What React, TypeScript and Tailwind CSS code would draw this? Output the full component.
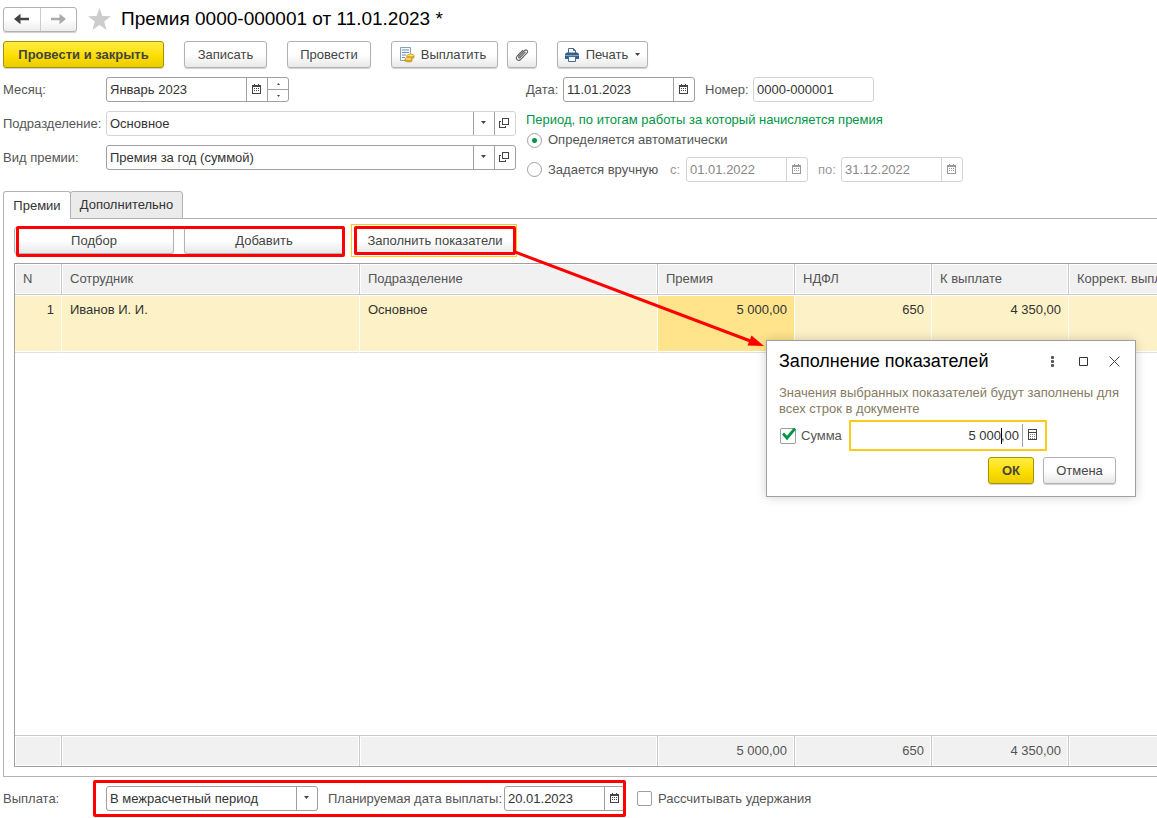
import type { ReactNode } from "react";
import { clsx } from "clsx";

const COLUMNS = [
  { title: "N", width: "w-[47px]", value: "1", total: "", right: true },
  { title: "Сотрудник", width: "w-[298px]", value: "Иванов И. И.", total: "", right: false },
  { title: "Подразделение", width: "w-[298px]", value: "Основное", total: "", right: false },
  { title: "Премия", width: "w-[137px]", value: "5 000,00", total: "5 000,00", right: true },
  { title: "НДФЛ", width: "w-[137px]", value: "650", total: "650", right: true },
  { title: "К выплате", width: "w-[137px]", value: "4 350,00", total: "4 350,00", right: true },
  { title: "Коррект. выплаты", width: "w-[137px]", value: "", total: "", right: true },
];

function CalendarIcon() {
  return (
    <svg width="9" height="10" viewBox="0 0 9 10" fill="none" shapeRendering="crispEdges" aria-hidden="true">
      <path d="M0 1h9v2H0zM2 0h1v1H2zM6 0h1v1H6zM0 3h1v6H0zM8 3h1v6H8zM0 9h9v1H0z" fill="currentColor" />
      <path d="M2 4h1v1H2zM4 4h1v1H4zM6 4h1v1H6zM2 6h1v1H2zM4 6h1v1H4zM6 6h1v1H6z" fill="currentColor" />
    </svg>
  );
}

function CalculatorIcon() {
  return (
    <svg width="9" height="11" viewBox="0 0 9 11" shapeRendering="crispEdges" fill="currentColor" aria-hidden="true">
      <path d="M0 0h9v1H0zM0 1h1v9H0zM8 1h1v9H8zM0 10h9v1H0zM1 3h7v1H1z" />
      <path d="M2 5h1v1H2zM4 5h1v1H4zM6 5h1v1H6zM2 7h1v1H2zM4 7h1v1H4zM6 7h1v1H6zM2 9h1v1H2zM4 9h1v1H4zM6 9h1v1H6z" opacity=".7" />
    </svg>
  );
}

function OpenIcon() {
  return (
    <svg width="10" height="10" viewBox="0 0 10 10" fill="none" stroke="currentColor" shapeRendering="crispEdges" aria-hidden="true">
      <path d="M3.5 .5h6v6h-6zM2 3.5H.5v6h6V8" />
    </svg>
  );
}

function DownIcon() {
  return (
    <svg width="5" height="3" viewBox="0 0 5 3" fill="currentColor" aria-hidden="true">
      <path d="M0 0h5L2.5 3z" />
    </svg>
  );
}

function ArrowIcon({ flip = false }: { flip?: boolean }) {
  return (
    <svg width="15" height="12" viewBox="0 0 15 12" className={clsx(flip && "rotate-180")} aria-hidden="true">
      <path d="M0 6 6.500.800V4.800H15v2.400H6.500v4z" fill="currentColor" />
    </svg>
  );
}

function PayIcon() {
  return (
    <svg width="16" height="16" viewBox="0 0 16 16" aria-hidden="true">
      <path d="M1.500.500h10v13h-10z" fill="#f4f8fb" stroke="#8aa0b4" />
      <path d="M3 3h7M3 5.500h7M3 8h4M3 10.500h3" stroke="#6f93b5" />
      <path d="M8 8.500v2c0 1.200 7 1.200 7 0v-2zM6 12v2c0 1.200 7 1.200 7 0v-2z" fill="#e3ac22" stroke="#b98816" strokeWidth=".7" />
      <ellipse cx="11.500" cy="8.500" rx="3.500" ry="1.400" fill="#ffdf70" stroke="#c4941c" strokeWidth=".7" />
      <ellipse cx="9.500" cy="12" rx="3.500" ry="1.400" fill="#ffdf70" stroke="#c4941c" strokeWidth=".7" />
    </svg>
  );
}

function PrinterIcon() {
  return (
    <svg width="14" height="14" viewBox="0 0 14 14" aria-hidden="true">
      <path d="M3.500 5V.500h5l2 2V5" fill="#fff" stroke="#476b8c" />
      <path d="M8.500.500v2h2" fill="none" stroke="#476b8c" />
      <path d="M1.500 4.500h11L14 6v5H0V6z" fill="#33618c" />
      <path d="M0 7.500h14" stroke="#7fa3c4" />
      <path d="M3.500 8.500h7v5h-7z" fill="#fff" stroke="#476b8c" />
    </svg>
  );
}

function ClipIcon() {
  return (
    <svg width="14" height="14" viewBox="0 0 14 14" fill="none" stroke="#606060" strokeWidth="1.100" strokeLinecap="round" aria-hidden="true">
      <path d="m10.200 4.200-5.100 5.300c-.9.900-2-.2-1.200-1.100l5.700-5.900c1.700-1.700 4.200.6 2.500 2.400l-6.300 6.500c-2.400 2.500-6-.8-3.600-3.400l5.500-5.700" />
    </svg>
  );
}

function PushButton({ children, className, primary = false, label }: { children: ReactNode; className?: string; primary?: boolean; label?: string }) {
  return (
    <button
      type="button"
      aria-label={label}
      className={clsx(
        "flex h-[27px] items-center justify-center rounded-[3px] border whitespace-nowrap shadow-[0_1px_1px_#00000030]",
        primary
          ? "border-[#a59300] bg-linear-to-b from-[#ffec3d] via-[#ffe000] to-[#ebcc00] font-bold text-[#444444]"
          : "border-[#b2b2b2] bg-linear-to-b from-white via-white to-[#e8e8e8] text-[#444444]",
        className,
      )}
    >
      {children}
    </button>
  );
}

function Segment({ children, label, tone }: { children: ReactNode; label: string; tone: string }) {
  return (
    <button type="button" aria-label={label} className={clsx("flex w-[21px] shrink-0 items-center justify-center border-l pr-0.5 pb-0.5", tone)}>
      {children}
    </button>
  );
}

const DARK = "border-[#a0a0a0] text-[#444444]";
const FADED = "border-[#d4d4d4] text-[#999999]";

function DateField({ id, value, className, disabled = false }: { id: string; value: string; className: string; disabled?: boolean }) {
  const tone = disabled ? FADED : DARK;
  return (
    <div className={clsx("flex h-[25px] shrink-0 rounded-[3px] border bg-white", tone, className)}>
      <input id={id} defaultValue={value} disabled={disabled} className={clsx("min-w-0 flex-1 px-[3px] outline-none", disabled ? "text-[#888888]" : "text-[#333333]")} />
      <Segment label="Открыть календарь" tone={tone}><CalendarIcon /></Segment>
    </div>
  );
}

function PickField({ id, value, className, light = false, open = true }: { id: string; value: string; className: string; light?: boolean; open?: boolean }) {
  return (
    <div className={clsx("flex h-[25px] shrink-0 rounded-[3px] border bg-white", light ? "border-[#d4d4d4]" : "border-[#a0a0a0]", className)}>
      <select id={id} className="min-w-0 flex-1 appearance-none px-[3px] text-[#333333] outline-none">
        <option>{value}</option>
      </select>
      <Segment label="Выбрать из списка" tone={DARK}><DownIcon /></Segment>
      {open && <Segment label="Открыть" tone={DARK}><OpenIcon /></Segment>}
    </div>
  );
}

function RedFrame({ className }: { className: string }) {
  return <div aria-hidden="true" className={clsx("pointer-events-none absolute rounded-[2px] border-3 border-[#ff0000]", className)} />;
}

function Dialog() {
  return (
    <section role="dialog" aria-labelledby="dialog-title" className="absolute top-[340px] left-[766px] w-[370px] border border-[#a0a0a0] bg-white px-3 pt-2 pb-3 shadow-[0_0_10px_#00000030]">
      <div className="-mr-1 flex h-6 items-center">
        <h2 id="dialog-title" className="flex-1 text-[18px] text-black">Заполнение показателей</h2>
        <div className="flex items-center gap-[5px] text-[#444444]">
          <button type="button" aria-label="Ещё" className="flex size-[26px] items-center justify-center">
            <svg width="3" height="11" viewBox="0 0 3 11" fill="#555555"><rect width="3" height="3" rx="1" /><rect y="4" width="3" height="3" rx="1" /><rect y="8" width="3" height="3" rx="1" /></svg>
          </button>
          <button type="button" aria-label="Развернуть" className="flex size-[26px] items-center justify-center">
            <svg width="9" height="9" viewBox="0 0 9 9" fill="none" stroke="#333333"><path d="M.5.5h8v8h-8z" /></svg>
          </button>
          <button type="button" aria-label="Закрыть" className="flex size-[26px] items-center justify-center">
            <svg width="11" height="11" viewBox="0 0 11 11" fill="none" stroke="#444444"><path d="m.5.5 10 10m0-10-10 10" /></svg>
          </button>
        </div>
      </div>
      <p className="mt-3 -mr-2 leading-4 text-[#857b62]">Значения выбранных показателей будут заполнены для всех строк в документе</p>
      <div className="mt-[3px] flex items-center">
        <label className="flex w-[70px] items-center gap-[5px] pl-px">
          <span className="relative flex size-4">
            <input type="checkbox" defaultChecked className="peer size-4 appearance-none rounded-[2px] border border-[#a0a0a0] bg-white" />
            <svg width="14" height="13" viewBox="0 0 14 13" className="pointer-events-none absolute top-0 left-0.5 hidden peer-checked:block" fill="none" stroke="#009646" strokeWidth="2.800"><path d="m1 5.500 4 4.500 8-9.500" /></svg>
          </span>
          Сумма
        </label>
        <div className="flex h-[31px] w-[198px] items-stretch border-2 border-[#fcc91c] py-0.5 pr-0.5">
          <div className="relative flex min-w-0 flex-1">
            <input aria-label="Сумма" defaultValue="5 000,00" className="w-full px-[3px] text-right text-[#333333] outline-none" />
            <span aria-hidden="true" className="absolute top-1 right-[20px] h-4 w-px bg-black" />
          </div>
          <Segment label="Калькулятор" tone={DARK}><CalculatorIcon /></Segment>
        </div>
      </div>
      <div className="mt-1.5 flex justify-end gap-[9px] pr-[7px]">
        <PushButton primary className="w-[46px]">ОК</PushButton>
        <PushButton className="w-[73px]">Отмена</PushButton>
      </div>
    </section>
  );
}

function BonusTable() {
  return (
    <div className="ml-[10px] flex flex-1 overflow-hidden border-y border-l border-[#a0a0a0]">
      <table className="w-[1191px] min-w-full shrink-0 table-fixed border-separate border-spacing-0 text-left">
        <thead>
          <tr className="h-[31px]">
            {COLUMNS.map((c, i) => (
              <th key={c.title} scope="col" className={clsx("border-b border-[#cacaca] bg-[#f1f1f1] px-2 font-normal text-[#555555] shadow-[inset_0_0_0_1px_white]", c.width, i < 6 && "border-r")}>
                {c.title}
              </th>
            ))}
          </tr>
        </thead>
        <tbody>
          <tr className="h-[58px]">
            {COLUMNS.map((c, i) => (
              <td key={c.title} className={clsx("border-b border-b-[#e0e0e0] pt-[7px] pr-[7px] pl-2 align-top text-[#333333] shadow-[inset_0_1px_white,inset_0_-1px_white]", i < 6 && "border-r border-r-white", i === 3 ? "bg-[#ffe48c]" : "bg-[#fdf2c7]", c.right && "text-right")}>
                {c.value}
              </td>
            ))}
          </tr>
          <tr><td colSpan={7} /></tr>
        </tbody>
        <tfoot>
          <tr className="h-[31px]">
            {COLUMNS.map((c, i) => (
              <td key={c.title} className={clsx("border-t border-[#cacaca] bg-[#f1f1f1] pr-[7px] pl-2 text-right text-[#555555] shadow-[inset_0_0_0_1px_white]", i < 6 && "border-r")}>
                {c.total}
              </td>
            ))}
          </tr>
        </tfoot>
      </table>
    </div>
  );
}

export default function App() {
  return (
    <main className="relative flex min-h-screen flex-col overflow-hidden bg-white pl-[3px] font-['Liberation_Sans',Arial,sans-serif] text-[13px] leading-4 text-[#555555]">
      <header className="flex h-[38px] items-center">
        <nav className="flex h-[25px] w-[74px] rounded-[3px] border border-[#b2b2b2] bg-linear-to-b from-white via-white to-[#ececec] shadow-[0_1px_1px_#00000030]">
          <button type="button" aria-label="Назад" className="flex flex-1 items-center justify-center border-r border-[#cccccc] text-[#444444]"><ArrowIcon /></button>
          <button type="button" aria-label="Вперед" className="flex flex-1 items-center justify-center text-[#aaaaaa]"><ArrowIcon flip /></button>
        </nav>
        <button type="button" aria-label="В избранное" className="ml-[11px]">
          <svg width="23" height="22" viewBox="0 0 23 22" fill="#cdcdcd"><path d="m11.500 0 2.900 7.900 8.600.3-6.800 5.200L18.600 22l-7.100-5-7.100 5 2.400-8.600L0 8.200l8.600-.3z" /></svg>
        </button>
        <h1 className="ml-[10px] text-[19px] text-black">Премия 0000-000001 от 11.01.2023 *</h1>
      </header>

      <div className="mt-[3px] flex">
        <PushButton primary className="w-[161px]">Провести и закрыть</PushButton>
        <PushButton className="ml-5 w-[83px]">Записать</PushButton>
        <PushButton className="ml-5 w-[84px]">Провести</PushButton>
        <PushButton className="ml-5 w-[107px] gap-1.5 pr-1"><PayIcon />Выплатить</PushButton>
        <PushButton className="ml-[9px] w-[30px]" label="Присоединенные файлы"><ClipIcon /></PushButton>
        <PushButton className="ml-5 w-[91px] gap-[7px]"><PrinterIcon />Печать<DownIcon /></PushButton>
      </div>

      <div className="mt-[9px] flex gap-[10px]">
        <div className="flex w-[513px] shrink-0 flex-col gap-[9px]">
          <div className="flex items-center">
            <label htmlFor="month" className="w-[103px]">Месяц:</label>
            <div className="flex h-[25px] w-[183px] rounded-[3px] border border-[#a0a0a0]">
              <input id="month" defaultValue="Январь 2023" className="min-w-0 flex-1 px-[3px] text-[#333333] outline-none" />
              <Segment label="Открыть календарь" tone={DARK}><CalendarIcon /></Segment>
              <div className="flex w-[21px] flex-col border-l border-[#a0a0a0] text-[#444444]">
                <button type="button" aria-label="Следующий месяц" className="flex flex-1 items-center justify-center border-b border-[#a0a0a0]">
                  <svg width="3" height="2" viewBox="0 0 3 2" fill="currentColor"><path d="M0 2h3L1.500 0z" /></svg>
                </button>
                <button type="button" aria-label="Предыдущий месяц" className="flex flex-1 items-center justify-center">
                  <svg width="3" height="2" viewBox="0 0 3 2" fill="currentColor"><path d="M0 0h3L1.500 2z" /></svg>
                </button>
              </div>
            </div>
          </div>
          <div className="flex items-center">
            <label htmlFor="department" className="w-[103px]">Подразделение:</label>
            <PickField id="department" value="Основное" className="w-[410px]" light />
          </div>
          <div className="flex items-center">
            <label htmlFor="kind" className="w-[103px]">Вид премии:</label>
            <PickField id="kind" value="Премия за год (суммой)" className="w-[410px]" />
          </div>
        </div>

        <div className="flex flex-col">
          <div className="flex items-center">
            <label htmlFor="date" className="w-[37px]">Дата:</label>
            <DateField id="date" value="11.01.2023" className="w-[132px]" />
            <label htmlFor="number" className="ml-[10px] w-12">Номер:</label>
            <input id="number" defaultValue="0000-000001" className="h-[25px] w-[121px] rounded-[3px] border border-[#d4d4d4] px-[3px] text-[#333333] outline-none" />
          </div>
          <fieldset className="mt-[10px]">
            <legend className="text-[#009646]">Период, по итогам работы за который начисляется премия</legend>
            <label className="mt-1 flex items-center gap-1.5">
              <input type="radio" name="period" defaultChecked className="ml-px size-[15px] appearance-none rounded-full border border-[#a0a0a0] bg-white checked:bg-[radial-gradient(circle,#009646_2px,transparent_3px)]" />
              Определяется автоматически
            </label>
            <div className="mt-[9px] flex items-center">
              <label className="flex w-36 items-center gap-1.5">
                <input type="radio" name="period" className="ml-px size-[15px] appearance-none rounded-full border border-[#a0a0a0] bg-white checked:bg-[radial-gradient(circle,#009646_2px,transparent_3px)]" />
                Задается вручную
              </label>
              <label htmlFor="from" className="w-4 text-[#999999]">с:</label>
              <DateField id="from" value="01.01.2022" className="w-[122px]" disabled />
              <label htmlFor="to" className="ml-[10px] w-[23px] text-[#999999]">по:</label>
              <DateField id="to" value="31.12.2022" className="w-[122px]" disabled />
            </div>
          </fieldset>
        </div>
      </div>

      <div role="tablist" className="relative z-10 mt-[9px] -mb-px flex h-7 text-[#333333]">
        <button type="button" role="tab" aria-selected="true" className="w-[68px] rounded-t-[3px] border border-b-0 border-[#b2b2b2] bg-white">Премии</button>
        <button type="button" role="tab" aria-selected="false" className="-ml-px w-[113px] rounded-t-[3px] border border-[#b2b2b2] bg-[#ebebeb]">Дополнительно</button>
      </div>

      <section role="tabpanel" className="flex flex-1 flex-col border-y border-l border-[#b2b2b2] pt-2 pb-[9px]">
        <div className="mb-[9px] ml-[10px] flex">
          <div className="relative flex gap-[10px]">
            <PushButton className="w-40">Подбор</PushButton>
            <PushButton className="w-40">Добавить</PushButton>
            <RedFrame className="-top-px -right-px -bottom-[3px] left-0.5" />
          </div>
          <div className="relative ml-[10px] flex">
            <PushButton className="w-[162px]">Заполнить показатели</PushButton>
            <div aria-hidden="true" className="pointer-events-none absolute -inset-y-[3px] -right-px -left-[3px] border border-[#fcc91c]" />
            <RedFrame className="-inset-y-px inset-x-0" />
          </div>
        </div>
        <BonusTable />
      </section>

      <footer className="flex h-[41px] items-center pt-0.5">
        <label htmlFor="payment" className="w-[103px]">Выплата:</label>
        <div className="relative flex items-center">
          <PickField id="payment" value="В межрасчетный период" className="w-[212px]" open={false} />
          <label htmlFor="payment-date" className="ml-[10px] w-44">Планируемая дата выплаты:</label>
          <DateField id="payment-date" value="20.01.2023" className="w-[122px]" />
          <RedFrame className="-inset-y-1.5 right-0 -left-[13px]" />
        </div>
        <label className="ml-[11px] flex items-center gap-1.5">
          <input type="checkbox" className="size-[15px] appearance-none rounded-[2px] border border-[#a0a0a0] bg-white checked:bg-[#009646]" />
          Рассчитывать удержания
        </label>
      </footer>

      <svg aria-hidden="true" width="252" height="98" viewBox="0 0 252 98" className="pointer-events-none absolute top-[251px] left-[515px] z-10">
        <path d="M0 1 238 91" stroke="#ff0000" strokeWidth="3" />
        <path d="m249 95-16.500-.500 4-10z" fill="#ff0000" />
      </svg>
      <Dialog />
    </main>
  );
}
